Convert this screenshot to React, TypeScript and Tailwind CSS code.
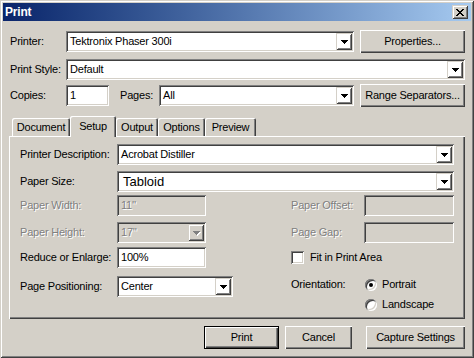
import React from "react";

const sunken =
  "shadow-[inset_1px_1px_0_#808080,inset_-1px_-1px_0_#ffffff,inset_2px_2px_0_#404040,inset_-2px_-2px_0_#d4d0c8]";
const raised =
  "shadow-[inset_1px_1px_0_#ffffff,inset_-1px_-1px_0_#404040,inset_-2px_-2px_0_#808080]";
const raisedInner =
  "shadow-[inset_1px_1px_0_#d4d0c8,inset_-1px_-1px_0_#404040,inset_2px_2px_0_#ffffff,inset_-2px_-2px_0_#808080]";
const dis = "text-[#808080] [text-shadow:1px_1px_0_#ffffff]";

function Arrow({ disabled }: { disabled?: boolean }) {
  const rows: [number, number][] = [
    [0, 7],
    [1, 5],
    [2, 3],
    [3, 1],
  ];
  return (
    <svg width="8" height="5" shapeRendering="crispEdges" className="block ml-[1px]">
      {disabled &&
        rows.map(([x, w], i) => (
          <rect key={"s" + i} x={x + 1} y={i + 1} width={w} height={1} fill="#ffffff" />
        ))}
      {rows.map(([x, w], i) => (
        <rect key={i} x={x} y={i} width={w} height={1} fill={disabled ? "#808080" : "#000000"} />
      ))}
    </svg>
  );
}

function Combo({
  w,
  text,
  big,
  disabled,
}: {
  w: string;
  text: string;
  big?: boolean;
  disabled?: boolean;
}) {
  return (
    <div className={`flex h-[21px] shrink-0 p-[2px] ${sunken} ${disabled ? "bg-[#d4d0c8]" : "bg-white"} ${w}`}>
      <div
        className={`flex flex-1 items-center overflow-hidden whitespace-nowrap ${
          big ? "pl-[4px] text-[13px] tracking-normal" : "pl-[2px]"
        } ${disabled ? dis : ""}`}
      >
        {text}
      </div>
      <div className={`flex w-[16px] shrink-0 items-center justify-center pt-[1px] ${raisedInner}`}>
        <Arrow disabled={disabled} />
      </div>
    </div>
  );
}

function Field({ w, text, disabled }: { w: string; text?: string; disabled?: boolean }) {
  return (
    <div
      className={`flex h-[21px] shrink-0 items-center p-[2px] pl-[4px] whitespace-nowrap ${sunken} ${
        disabled ? "bg-[#d4d0c8] " + dis : "bg-white"
      } ${w}`}
    >
      {text}
    </div>
  );
}

function Btn({ w, children, def }: { w: string; children: React.ReactNode; def?: boolean }) {
  if (def) {
    return (
      <div className={`flex h-[23px] shrink-0 border border-black ${w}`}>
        <div className={`flex flex-1 items-center justify-center ${raised}`}>{children}</div>
      </div>
    );
  }
  return (
    <div className={`flex h-[23px] shrink-0 items-center justify-center ${raised} ${w}`}>{children}</div>
  );
}

function Tab({ w, label, selected }: { w: string; label: string; selected?: boolean }) {
  if (selected) {
    return (
      <div
        className={`relative z-10 mb-[-1px] flex h-[21px] shrink-0 items-start justify-center rounded-t-[2px] bg-[#d4d0c8] pt-[2px] shadow-[inset_1px_1px_0_#ffffff,inset_-1px_0_0_#404040,inset_-2px_0_0_#808080] ${w}`}
      >
        {label}
      </div>
    );
  }
  return (
    <div
      className={`flex h-[18px] shrink-0 items-center justify-center rounded-t-[2px] pt-[1px] shadow-[inset_1px_1px_0_#ffffff,inset_-1px_0_0_#404040,inset_-2px_0_0_#808080] ${w}`}
    >
      {label}
    </div>
  );
}

function CloseGlyph() {
  const rows: [number, number][][] = [
    [[0, 2], [6, 2]],
    [[1, 2], [5, 2]],
    [[2, 4]],
    [[3, 2]],
    [[2, 4]],
    [[1, 2], [5, 2]],
    [[0, 2], [6, 2]],
  ];
  return (
    <svg width="8" height="7" shapeRendering="crispEdges" className="block">
      {rows.map((segs, y) =>
        segs.map(([x, w], i) => <rect key={y + "-" + i} x={x} y={y} width={w} height={1} fill="#000" />)
      )}
    </svg>
  );
}

export default function App() {
  return (
    <div className="h-[358px] w-[474px] overflow-hidden bg-[#d4d0c8] font-['Liberation_Sans',Arial,sans-serif] text-[11px] tracking-[-0.2px] text-black">
      <div className="flex h-full w-full flex-col p-[3px] shadow-[inset_1px_1px_0_#d4d0c8,inset_-1px_-1px_0_#404040,inset_2px_2px_0_#ffffff,inset_-2px_-2px_0_#808080]">
        {/* Title bar */}
        <div className="flex h-[18px] shrink-0 items-center justify-between bg-gradient-to-r from-[#0a246a] to-[#a6caf0] pl-[2px] pr-[3px]">
          <span className="text-[12px] font-bold tracking-[-0.2px] text-white">Print</span>
          <div className={`flex h-[14px] w-[16px] items-center justify-center bg-[#d4d0c8] ${raisedInner}`}>
            <CloseGlyph />
          </div>
        </div>

        {/* Row 1 */}
        <div className="mt-[9px] flex h-[23px] items-center pl-[7px]">
          <div className="w-[56px]">Printer:</div>
          <Combo w="w-[288px]" text="Tektronix Phaser 300i" />
          <Btn w="ml-[6px] w-[105px]">Properties...</Btn>
        </div>

        {/* Row 2 */}
        <div className="mt-[6px] flex h-[21px] items-center pl-[7px]">
          <div className="w-[56px] whitespace-nowrap">Print Style:</div>
          <Combo w="w-[399px]" text="Default" />
        </div>

        {/* Row 3 */}
        <div className="mt-[4px] flex h-[23px] items-center pl-[7px]">
          <div className="w-[56px]">Copies:</div>
          <Field w="w-[43px]" text="1" />
          <div className="ml-[11px] w-[39px]">Pages:</div>
          <Combo w="w-[195px]" text="All" />
          <Btn w="ml-[6px] w-[105px]">Range Separators...</Btn>
        </div>

        {/* Tabs */}
        <div className="ml-[6px] flex w-[456px] flex-col">
          <div className="mt-[9px] flex h-[20px] items-end pl-[3px]">
            <Tab w="w-[58px]" label="Document" />
            <Tab w="w-[46px]" label="Setup" selected />
            <Tab w="w-[42px]" label="Output" />
            <Tab w="w-[47px]" label="Options" />
            <Tab w="w-[51px]" label="Preview" />
          </div>
          <div className="flex h-[183px] flex-col pl-[11px] pt-[8px] shadow-[inset_1px_1px_0_#ffffff,inset_-1px_-1px_0_#404040,inset_-2px_-2px_0_#808080]">
            {/* Printer Description */}
            <div className="flex h-[21px] items-center">
              <div className="w-[97px] whitespace-nowrap">Printer Description:</div>
              <Combo w="w-[337px]" text="Acrobat Distiller" />
            </div>
            {/* Paper Size */}
            <div className="mt-[6px] flex h-[21px] items-center">
              <div className="w-[97px]">Paper Size:</div>
              <Combo w="w-[337px]" text="Tabloid" big />
            </div>
            {/* Paper Width / Offset */}
            <div className="mt-[3px] flex h-[21px] items-center">
              <div className="flex w-[271px] items-center">
                <div className={`w-[97px] ${dis}`}>Paper Width:</div>
                <Field w="w-[89px]" text="11''" disabled />
              </div>
              <div className={`w-[73px] whitespace-nowrap ${dis}`}>Paper Offset:</div>
              <Field w="w-[90px]" disabled />
            </div>
            {/* Paper Height / Gap */}
            <div className="mt-[6px] flex h-[21px] items-center">
              <div className="flex w-[271px] items-center">
                <div className={`w-[97px] ${dis}`}>Paper Height:</div>
                <Combo w="w-[89px]" text="17''" disabled />
              </div>
              <div className={`w-[73px] whitespace-nowrap ${dis}`}>Page Gap:</div>
              <Field w="w-[90px]" disabled />
            </div>
            {/* Reduce / Fit */}
            <div className="mt-[4px] flex h-[21px] items-center">
              <div className="flex w-[271px] items-center">
                <div className="w-[97px] whitespace-nowrap">Reduce or Enlarge:</div>
                <Field w="w-[89px]" text="100%" />
              </div>
              <div className={`h-[13px] w-[13px] bg-white ${sunken}`} />
              <div className="ml-[6px]">Fit in Print Area</div>
            </div>
            {/* Page Positioning / Orientation */}
            <div className="mt-[8px] flex items-start">
              <div className="flex w-[271px] items-center">
                <div className="w-[97px] whitespace-nowrap">Page Positioning:</div>
                <Combo w="w-[116px]" text="Center" />
              </div>
              <div className="mt-[2px] flex items-start">
                <div className="flex h-[13px] w-[74px] items-center">Orientation:</div>
                <div className="flex flex-col">
                  <div className="flex h-[13px] items-center">
                    <div className={`flex h-[12px] w-[12px] items-center justify-center rounded-full bg-white ${sunken}`}>
                      <div className="h-[4px] w-[4px] rounded-full bg-black" />
                    </div>
                    <div className="ml-[5px]">Portrait</div>
                  </div>
                  <div className="mt-[7px] flex h-[13px] items-center">
                    <div className={`h-[12px] w-[12px] rounded-full bg-white ${sunken}`} />
                    <div className="ml-[5px]">Landscape</div>
                  </div>
                </div>
              </div>
            </div>
          </div>
        </div>

        {/* Buttons */}
        <div className="mt-[7px] flex h-[23px] items-center justify-end pr-[6px]">
          <Btn w="w-[75px]" def>
            Print
          </Btn>
          <Btn w="ml-[6px] w-[67px]">Cancel</Btn>
          <Btn w="ml-[14px] w-[99px]">Capture Settings</Btn>
        </div>
      </div>
    </div>
  );
}
